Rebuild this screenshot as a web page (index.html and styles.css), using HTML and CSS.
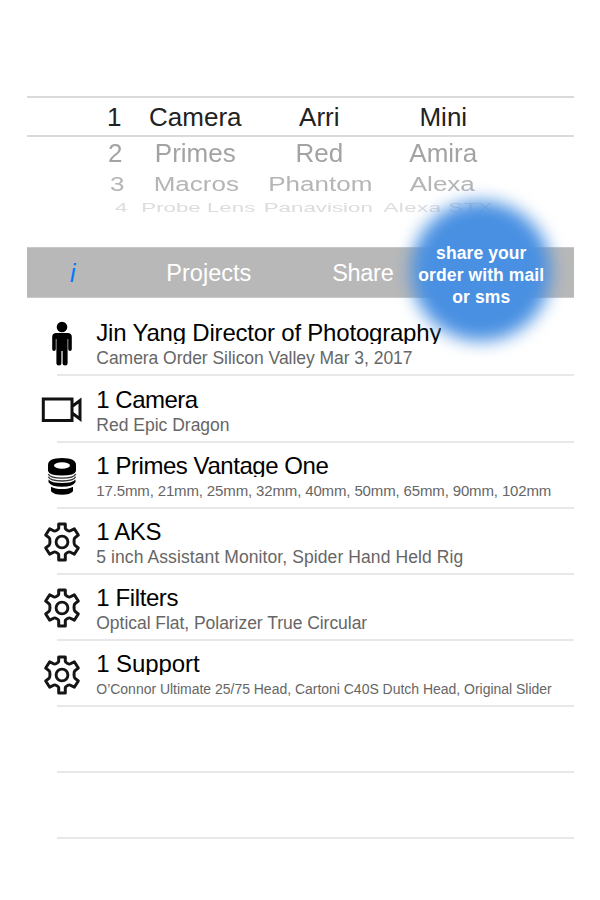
FILE: index.html
```html
<!DOCTYPE html>
<html lang="en">
<head>
<meta charset="utf-8">
<title>Camera Order</title>
<link rel="stylesheet" href="styles.css">
</head>
<body>
<svg class="defs" aria-hidden="true">
  <symbol id="gear" viewBox="0 0 38 40">
    <path d="M15.700 2h6.600v4.500c0 1 3.500 3 4.500 2.500l4.500-2.200 4 6.200-3.500 2.800c-1 1-1 6.400 0 7.400l3.500 2.800-4 6.200-4.500-2.200c-1-.5-4.500 1.500-4.500 2.500V38h-6.600v-5.500c0-1-3.500-3-4.500-2.500l-4.500 2.200-4-6.200 3.500-2.800c1-1 1-6.400 0-7.400L2.700 13l4-6.200L11.200 9c1 .5 4.500-1.500 4.500-2.500z" fill="none" stroke="#151515" stroke-width="3" stroke-linejoin="round"/>
    <circle cx="19" cy="20" r="5.900" fill="none" stroke="#151515" stroke-width="2.900"/>
  </symbol>
</svg>
<main class="screen">
  <section class="picker">
    <div class="wheel selected"><span>1</span><span>Camera</span><span>Arri</span><span>Mini</span></div>
    <div class="wheel second"><span>2</span><span>Primes</span><span>Red</span><span>Amira</span></div>
    <div class="wheel third"><span>3</span><span>Macros</span><span>Phantom</span><span>Alexa</span></div>
    <div class="wheel fourth"><span>4</span><span>Probe Lens</span><span>Panavision</span><span>Alexa STX</span></div>
  </section>
  <nav class="toolbar">
    <span class="info">i</span><span class="projects">Projects</span><span class="share">Share</span>
    <div class="bubble"><p>share your<br>order with mail<br>or sms</p></div>
  </nav>
  <ul class="orders">
    <li><div class="icon"><svg width="22" height="46" viewBox="0 0 22 46"><circle cx="11" cy="6" r="5.300"/><path d="M5.500 12h11q4.300 0 4.300 4v12q0 2-1.800 2t-1.800-2V18h-.6v24.500q0 2-2.500 2t-2.500-2V30h-1.200v12.500q0 2-2.500 2t-2.500-2V18H4.800v10q0 2-1.800 2t-1.800-2V16q0-4 4.300-4z"/></svg></div>
      <div class="text"><h2 class="t1">Jin Yang Director of Photography</h2><p class="s1">Camera Order Silicon Valley Mar 3, 2017</p></div></li>
    <li><div class="icon"><svg width="42" height="26" viewBox="0 0 42 26" fill="none" stroke="#111" stroke-width="3"><path d="M2.300 2h28.700v21.500H2.300zM31 9.500l8-6v18.500l-8-6"/></svg></div>
      <div class="text"><h2 class="t2">1 Camera</h2><p>Red Epic Dragon</p></div></li>
    <li><div class="icon"><svg width="30" height="38" viewBox="0 0 30 38"><path d="M1 8Q1 1 15 1t14 7v6q-1 4.500-14 4.500T1 14z"/><ellipse cx="15" cy="8.500" rx="8" ry="3.300" fill="#fff"/><path d="M1.300 17q2 4.200 13.700 4.200T28.700 17M1.300 19.800q2 4.200 13.700 4.200t13.700-4.200" fill="none" stroke="#333" stroke-width="1.300"/><path d="M1.500 22.500q3 3.500 13.500 3.500t13.500-3.500v2.800q-3 4.500-13.500 4.500T1.500 25.300z"/><path d="M4 29.700q4 2.300 11 2.300t11-2.300v4.500q-3 3.500-11 3.500T4 34.200z"/></svg></div>
      <div class="text"><h2 class="t3">1 Primes Vantage One</h2><p class="s3">17.5mm, 21mm, 25mm, 32mm, 40mm, 50mm, 65mm, 90mm, 102mm</p></div></li>
    <li><div class="icon"><svg width="38" height="40"><use href="#gear"/></svg></div>
      <div class="text"><h2>1 AKS</h2><p class="s4">5 inch Assistant Monitor, Spider Hand Held Rig</p></div></li>
    <li><div class="icon"><svg width="38" height="40"><use href="#gear"/></svg></div>
      <div class="text"><h2>1 Filters</h2><p class="s5">Optical Flat, Polarizer True Circular</p></div></li>
    <li><div class="icon"><svg width="38" height="40"><use href="#gear"/></svg></div>
      <div class="text"><h2 class="t6">1 Support</h2><p class="s6">O’Connor Ultimate 25/75 Head, Cartoni C40S Dutch Head, Original Slider</p></div></li>
    <li></li>
    <li></li>
  </ul>
</main>
</body>
</html>
```
FILE: styles.css
```css
* { box-sizing: border-box; }
body { margin: 0; background: #fff; font-family: "Liberation Sans", Arial, sans-serif; }
.defs { display: block; width: 0; height: 0; }
.screen { width: 546.5px; height: 900px; margin-left: 27.3px; padding-top: 96px; }

.picker { height: 150.500px; }
.wheel { display: flex; align-items: center; font-size: 26px; white-space: nowrap; }
.wheel span { display: flex; justify-content: center; width: 124px; flex: none; }
.wheel span:first-child { width: 38px; margin-left: 68px; }
.selected { height: 41px; border-top: 2px solid #dadada; border-bottom: 2px solid #dadada; color: #222; padding-top: 2px; }
.second { height: 32px; color: #a3a3a3; transform: scaleY(.97); }
.third { height: 30px; color: #b5b5b5; transform: scaleY(.8); }
.fourth { height: 18px; color: #dcdcdc; font-size: 22.300px; transform: scaleY(.6); }
.second span:first-child { margin-left: 69px; margin-right: -1px; }
.third span:first-child { margin-left: 71px; margin-right: -2px; }
.third span:nth-child(4) { margin-left: -2px; }
.fourth span:first-child { margin-left: 75px; margin-right: -4px; }
.fourth span:nth-child(3) { margin-left: -4px; }
.fourth span:nth-child(4) { margin-left: -4px; letter-spacing: .5px; }

.toolbar { position: relative; display: flex; align-items: center; height: 51px; background: #b8b8b8; border-top: 1px solid #c8c8c8; border-bottom: 1px solid #c8c8c8; color: #fff; font-size: 23.500px; }
.toolbar span { padding-top: 2px; }
.info { width: 91px; text-align: center; color: #007aff; font-style: italic; font-size: 25px; }
.projects { width: 181px; text-align: center; }
.share { width: 127px; text-align: center; letter-spacing: -.3px; }
.bubble { position: absolute; left: 374px; top: -57px; width: 160px; height: 160px; display: grid; place-items: center; isolation: isolate; }
.bubble::before { content: ""; position: absolute; z-index: -1; inset: 10px; border-radius: 50%; background: #4990e2; filter: blur(8.500px); }
.bubble p { margin: 8px 0 0; text-align: center; font-size: 17.500px; line-height: 22px; font-weight: bold; letter-spacing: .1px; white-space: nowrap; }

.orders { list-style: none; margin: 0; padding: 12.800px 0 0; }
.orders li { display: flex; height: 66.150px; background: linear-gradient(#e8e8e8, #e8e8e8) 29.500px 100% / 517px 2px no-repeat; }
.icon { width: 69px; height: 67px; display: flex; align-items: center; justify-content: center; flex: none; }
.text { padding-top: 9.200px; white-space: nowrap; }
h2 { margin: 0; font-size: 24px; font-weight: normal; line-height: 28px; height: 25px; overflow: hidden; color: #000; letter-spacing: -.4px; }
.t1 { letter-spacing: -.2px; }
.t2 { letter-spacing: -.5px; }
.t3 { letter-spacing: -.45px; }
.t6 { letter-spacing: -.1px; }
.text p { margin: 3px 0 0; font-size: 17.500px; line-height: 22px; color: #666; }
.text .s1 { letter-spacing: -.04px; }
.text .s3 { font-size: 15px; letter-spacing: -.14px; }
.text .s4 { letter-spacing: .09px; }
.text .s5 { letter-spacing: -.04px; }
.text .s6 { font-size: 14px; letter-spacing: -.02px; }
```
